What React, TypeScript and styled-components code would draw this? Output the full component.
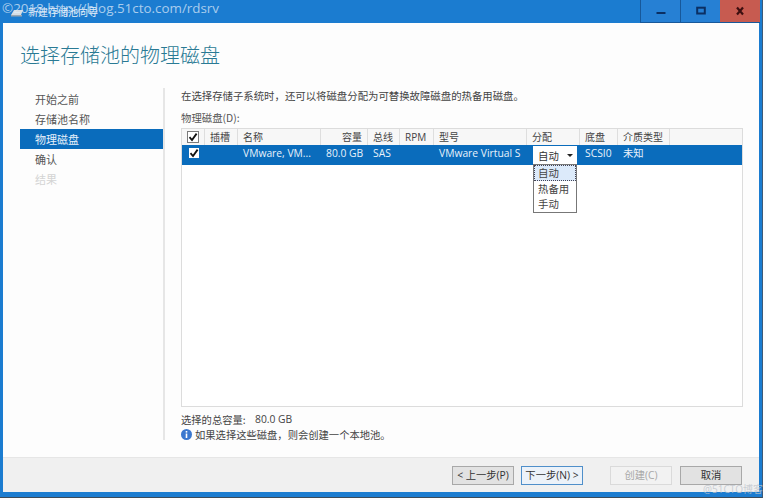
import React from "react";
import styled, { createGlobalStyle } from "styled-components";

const Global = createGlobalStyle`
  html, body { margin: 0; padding: 0; background: #fff; }
  #root { width: 766px; height: 500px; overflow: hidden; }
  * { box-sizing: border-box; }
`;

const FONT = `"Open Sans", "Noto Sans CJK SC", sans-serif`;
const CJK = `"Noto Sans CJK SC", "Open Sans", sans-serif`;

const Stage = styled.div`
  position: relative;
  width: 766px;
  height: 500px;
  background: #fdfdfd;
  font-family: ${CJK};
  font-size: 10.5px;
  color: #333;
  overflow: hidden;
`;

const Win = styled.div`
  width: 763px;
  height: 498px;
  display: flex;
  flex-direction: column;
  background: #1b7cd0;
  padding: 0 3px 5px 3px;
  border-right: 1px solid #3c5a78;
  border-bottom: 1px solid #3c4a58;
`;

const TitleBar = styled.div`
  height: 23px;
  flex: none;
  display: flex;
  align-items: flex-start;
  justify-content: space-between;
`;

const TitleLeft = styled.div`
  display: flex;
  align-items: center;
  gap: 4px;
  padding: 5px 0 0 7px;
  color: #e4eef8;
  font-size: 10px;
  line-height: 14px;
`;

const WinButtons = styled.div`
  display: flex;
  margin-right: -1px;
`;

const WinButton = styled.div<{ $close?: boolean }>`
  width: 40px;
  height: 23px;
  display: flex;
  align-items: center;
  justify-content: center;
  background: ${(p) => (p.$close ? "#c75b50" : "#2680d4")};
  border-left: ${(p) => (p.$close ? "0" : "1px solid #17589a")};
  border-bottom: 1px solid #17589a;
`;

const Content = styled.div`
  flex: 1;
  min-height: 0;
  display: flex;
  flex-direction: column;
  background: #fdfdfd;
`;

const Heading = styled.h1`
  margin: 0;
  height: 57px;
  flex: none;
  padding: 17px 0 0 17px;
  font-family: ${CJK};
  font-weight: 300;
  font-size: 20px;
  line-height: 29px;
  color: #2a7a94;
`;

const Body = styled.div`
  flex: 1;
  min-height: 0;
  display: flex;
`;

const Side = styled.nav`
  width: 162px;
  flex: none;
  margin: 8px 0 17px 0;
  padding-left: 17px;
  padding-top: 1px;
  border-right: 2px solid #e6e6e6;
  display: flex;
  flex-direction: column;
`;

const NavItem = styled.div<{ $active?: boolean; $off?: boolean }>`
  height: 20px;
  line-height: 20px;
  padding-left: 15px;
  font-size: 11px;
  background: ${(p) => (p.$active ? "#0a6cbc" : "transparent")};
  color: ${(p) => (p.$active ? "#e6f0fa" : p.$off ? "#d4d4d4" : "#555")};
`;

const Main = styled.main`
  flex: 1;
  min-width: 0;
  padding: 8px 16px 0 16px;
  display: flex;
  flex-direction: column;
`;

const Intro = styled.p`
  margin: 0;
  height: 22px;
  line-height: 15px;
  font-size: 10.4px;
  color: #444;
`;

const TableLabel = styled.div`
  height: 15px;
  line-height: 15px;
  font-size: 10.4px;
  color: #555;
  margin-bottom: 3px;
  font-family: ${CJK};
`;

const Table = styled.div`
  position: relative;
  width: 562px;
  height: 279px;
  flex: none;
  border: 1px solid #dcdcdc;
  background: #fff;
`;

const COLUMNS = "23px 33px 83px 47px 32px 34px 93px 53px 38px 52px";

const HeaderRow = styled.div`
  display: grid;
  grid-template-columns: ${COLUMNS};
  height: 16px;
  background: #f7f7f7;
`;

const HeadCell = styled.div<{ $right?: boolean }>`
  border-right: 1px solid #dedede;
  line-height: 16px;
  padding: 0 5px;
  font-size: 10px;
  color: #444;
  white-space: nowrap;
  text-align: ${(p) => (p.$right ? "right" : "left")};
  font-family: ${FONT};
`;

const HeadCheckCell = styled.div`
  border-right: 1px solid #dedede;
  display: flex;
  justify-content: center;
  padding: 2px 0 0 0;
`;

const DataRow = styled.div`
  display: grid;
  grid-template-columns: ${COLUMNS};
  height: 20px;
  background: #0a6cbc;
`;

const DataCell = styled.div<{ $right?: boolean }>`
  line-height: 17px;
  padding: 0 5px;
  font-size: 10.3px;
  color: #e8f2fb;
  white-space: nowrap;
  text-align: ${(p) => (p.$right ? "right" : "left")};
  font-family: ${FONT};
`;

const CheckCell = styled.div`
  display: flex;
  justify-content: center;
  padding: 3px 0 0 0;
`;

const Check = styled.div<{ $framed?: boolean }>`
  width: ${(p) => (p.$framed ? 12 : 10)}px;
  height: ${(p) => (p.$framed ? 12 : 10)}px;
  background: #fff;
  border: ${(p) => (p.$framed ? "1px solid #7a7a7a" : "0")};
  display: flex;
  align-items: center;
  justify-content: center;
`;

const SelectBox = styled.div`
  position: absolute;
  left: 351px;
  top: 17px;
  width: 44px;
  height: 18px;
  background: #fff;
  display: flex;
  align-items: center;
  justify-content: space-between;
  padding: 0 4px 0 5px;
  font-size: 10.4px;
  color: #333;
`;

const Arrow = styled.span`
  width: 0;
  height: 0;
  border-left: 3px solid transparent;
  border-right: 3px solid transparent;
  border-top: 3px solid #222;
`;

const DropList = styled.div`
  position: absolute;
  left: 351px;
  top: 35px;
  width: 44px;
  height: 49px;
  background: #fff;
  border: 1px solid #777;
  display: flex;
  flex-direction: column;
`;

const DropItem = styled.div<{ $on?: boolean }>`
  height: 16px;
  line-height: 13px;
  padding-left: 3px;
  font-size: 10.4px;
  color: #444;
  background: ${(p) => (p.$on ? "#dceafa" : "transparent")};
  border: 1px ${(p) => (p.$on ? "dotted #445" : "solid transparent")};
`;

const Summary = styled.div`
  margin-top: 5px;
  height: 15px;
  line-height: 15px;
  font-size: 10.3px;
  color: #444;
  display: flex;
  font-family: ${FONT};
`;

const SumLabel = styled.span`
  width: 74px;
  font-family: ${CJK};
`;

const Note = styled.div`
  height: 15px;
  line-height: 14px;
  font-size: 10.3px;
  color: #444;
  display: flex;
  align-items: center;
  gap: 3px;
`;

const Footer = styled.footer`
  height: 35px;
  flex: none;
  background: #f0f0f0;
  border-top: 1px solid #e6e6e6;
  display: flex;
  align-items: flex-start;
  padding: 8px 0 0 449px;
`;

const Btn = styled.div<{ $primary?: boolean; $off?: boolean; $ml?: number }>`
  width: 62px;
  height: 19px;
  margin-left: ${(p) => p.$ml ?? 0}px;
  line-height: 16px;
  text-align: center;
  font-size: 10.3px;
  font-family: ${FONT};
  background: ${(p) => (p.$primary ? "#ecf2f9" : p.$off ? "#f2f2f2" : "#e2e2e2")};
  border: 1px solid ${(p) => (p.$primary ? "#4f8fca" : p.$off ? "#dadada" : "#a8a8a8")};
  color: ${(p) => (p.$off ? "#a8a8a8" : "#333")};
`;

const WatermarkTop = styled.div`
  position: absolute;
  left: 2px;
  top: 0;
  font-family: "Open Sans", sans-serif;
  font-size: 13.4px;
  line-height: 17px;
  color: rgba(225, 238, 250, 0.72);
  white-space: nowrap;
`;

const WatermarkBottom = styled.div`
  position: absolute;
  right: 3px;
  bottom: 4px;
  font-family: ${FONT};
  font-size: 10px;
  line-height: 14px;
  color: rgba(190, 196, 204, 0.8);
  white-space: nowrap;
`;

const Tick = () => (
  <svg width="10" height="10" viewBox="0 0 10 10">
    <path d="M1.5 5.2 L4 8 L8.6 1.6" fill="none" stroke="#111" strokeWidth="1.8" />
  </svg>
);

const AppIcon = () => (
  <svg width="14" height="10" viewBox="0 0 14 10">
    <path d="M1 8 L4 3 H13 L11 8 Z" fill="#d6dde4" />
    <rect x="1" y="8" width="11" height="1.5" fill="#9aa6b2" />
  </svg>
);

const InfoIcon = () => (
  <svg width="11" height="11" viewBox="0 0 11 11">
    <circle cx="5.5" cy="5.5" r="5.5" fill="#3b78cf" />
    <rect x="4.7" y="2" width="1.6" height="1.6" fill="#fff" />
    <rect x="4.7" y="4.5" width="1.6" height="4.5" fill="#fff" />
  </svg>
);

const heads: [string, boolean][] = [
  ["插槽", false],
  ["名称", false],
  ["容量", true],
  ["总线", false],
  ["RPM", false],
  ["型号", false],
  ["分配", false],
  ["底盘", false],
  ["介质类型", false],
];

export default function App() {
  return (
    <Stage>
      <Global />
      <Win>
        <TitleBar>
          <TitleLeft>
            <AppIcon />
            <span>新建存储池向导</span>
          </TitleLeft>
          <WinButtons>
            <WinButton>
              <svg width="10" height="10" viewBox="0 0 10 10">
                <rect x="0.5" y="6" width="9" height="2" fill="#0b2f63" />
              </svg>
            </WinButton>
            <WinButton>
              <svg width="10" height="10" viewBox="0 0 10 10">
                <rect x="1.2" y="1.7" width="7.6" height="5.8" fill="none" stroke="#0b2f63" strokeWidth="2" />
              </svg>
            </WinButton>
            <WinButton $close>
              <svg width="10" height="10" viewBox="0 0 10 10">
                <path d="M2 1.5 L8 8.5 M8 1.5 L2 8.5" stroke="#3d0f10" strokeWidth="2.2" />
              </svg>
            </WinButton>
          </WinButtons>
        </TitleBar>
        <Content>
          <Heading>选择存储池的物理磁盘</Heading>
          <Body>
            <Side>
              <NavItem>开始之前</NavItem>
              <NavItem>存储池名称</NavItem>
              <NavItem $active>物理磁盘</NavItem>
              <NavItem>确认</NavItem>
              <NavItem $off>结果</NavItem>
            </Side>
            <Main>
              <Intro>在选择存储子系统时，还可以将磁盘分配为可替换故障磁盘的热备用磁盘。</Intro>
              <TableLabel>物理磁盘(D):</TableLabel>
              <Table>
                <HeaderRow>
                  <HeadCheckCell>
                    <Check $framed>
                      <Tick />
                    </Check>
                  </HeadCheckCell>
                  {heads.map(([t, r]) => (
                    <HeadCell key={t} $right={r}>
                      {t}
                    </HeadCell>
                  ))}
                </HeaderRow>
                <DataRow>
                  <CheckCell>
                    <Check>
                      <Tick />
                    </Check>
                  </CheckCell>
                  <DataCell />
                  <DataCell>VMware, VM...</DataCell>
                  <DataCell $right>80.0 GB</DataCell>
                  <DataCell>SAS</DataCell>
                  <DataCell />
                  <DataCell>VMware Virtual S</DataCell>
                  <DataCell />
                  <DataCell>SCSI0</DataCell>
                  <DataCell>未知</DataCell>
                </DataRow>
                <SelectBox>
                  <span>自动</span>
                  <Arrow />
                </SelectBox>
                <DropList>
                  <DropItem $on>自动</DropItem>
                  <DropItem>热备用</DropItem>
                  <DropItem>手动</DropItem>
                </DropList>
              </Table>
              <Summary>
                <SumLabel>选择的总容量:</SumLabel>
                <span>80.0 GB</span>
              </Summary>
              <Note>
                <InfoIcon />
                <span>如果选择这些磁盘，则会创建一个本地池。</span>
              </Note>
            </Main>
          </Body>
          <Footer>
            <Btn>&lt; 上一步(P)</Btn>
            <Btn $primary $ml={7}>下一步(N) &gt;</Btn>
            <Btn $off $ml={27}>创建(C)</Btn>
            <Btn $ml={8}>取消</Btn>
          </Footer>
        </Content>
      </Win>
      <WatermarkTop>©2018 http://blog.51cto.com/rdsrv</WatermarkTop>
      <WatermarkBottom>@51CTO博客</WatermarkBottom>
    </Stage>
  );
}
